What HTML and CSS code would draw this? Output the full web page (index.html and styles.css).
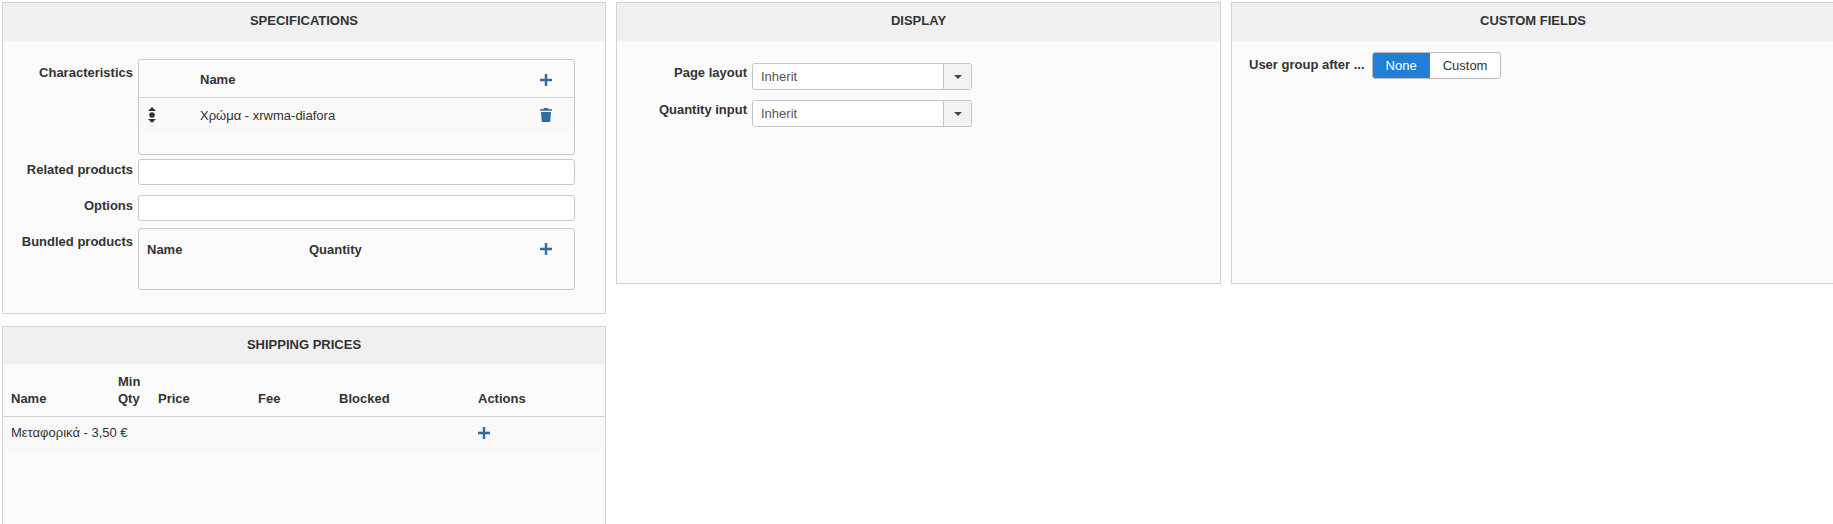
FILE: index.html
```html
<!DOCTYPE html>
<html lang="en">
<head>
  <meta charset="UTF-8" />
  <title>Product – Specifications</title>
  <link rel="stylesheet" href="styles.css">
</head>
<body>
  <svg width="0" height="0" class="defs">
    <symbol id="i-plus" viewBox="0 0 12 12"><path d="M4.800 0h2.400v4.800H12v2.400H7.200V12H4.800V7.200H0V4.800h4.800z"/></symbol>
    <symbol id="i-trash" viewBox="0 0 12 14"><path d="M4 0h4l.6 1.200H12v1.600H0V1.200h3.400zM1 4h10l-.7 9a1 1 0 0 1-1 1H2.700a1 1 0 0 1-1-1z"/></symbol>
    <symbol id="i-sort" viewBox="0 0 10 16"><path d="M5 0l4 4H1zM5 16l-4-4h8z"/><circle cx="5" cy="8" r="2.800"/></symbol>
  </svg>

  <div class="page">
    <div class="column">
      <section class="panel panel-specs">
        <h2 class="panel-title">SPECIFICATIONS</h2>
        <div class="specs-form">
          <div class="form-row row-chars">
            <label class="field-label">Characteristics</label>
            <div class="box box-chars">
              <div class="chars-head">
                <span class="chars-name"><b>Name</b></span>
                <svg class="icon icon-plus"><use href="#i-plus"/></svg>
              </div>
              <div class="chars-item">
                <svg class="icon-sort"><use href="#i-sort"/></svg>
                <span class="chars-name chars-value">Χρώμα - xrwma-diafora</span>
                <svg class="icon icon-trash"><use href="#i-trash"/></svg>
              </div>
            </div>
          </div>
          <div class="form-row row-related">
            <label class="field-label">Related products</label>
            <input class="text-input" type="text" />
          </div>
          <div class="form-row row-options">
            <label class="field-label">Options</label>
            <input class="text-input" type="text" />
          </div>
          <div class="form-row">
            <label class="field-label">Bundled products</label>
            <div class="box box-bundled">
              <div class="bundled-head">
                <b class="bundled-name">Name</b>
                <b class="bundled-qty">Quantity</b>
                <svg class="icon icon-plus"><use href="#i-plus"/></svg>
              </div>
            </div>
          </div>
        </div>
      </section>

      <section class="panel panel-shipping">
        <h2 class="panel-title">SHIPPING PRICES</h2>
        <table class="shipping-table">
          <thead>
            <tr>
              <th class="col-name">Name</th>
              <th class="col-qty">Min Qty</th>
              <th class="col-price">Price</th>
              <th class="col-fee">Fee</th>
              <th class="col-blocked">Blocked</th>
              <th>Actions</th>
            </tr>
          </thead>
          <tbody>
            <tr>
              <td colspan="5">Μεταφορικά - 3,50 €</td>
              <td><svg class="icon icon-plus"><use href="#i-plus"/></svg></td>
            </tr>
          </tbody>
        </table>
      </section>
    </div>

    <section class="panel panel-display">
      <h2 class="panel-title">DISPLAY</h2>
      <div class="display-form">
        <div class="select-row">
          <label class="field-label">Page layout</label>
          <div class="select-box"><span class="select-value">Inherit</span><span class="select-btn"><i class="caret"></i></span></div>
        </div>
        <div class="select-row">
          <label class="field-label">Quantity input</label>
          <div class="select-box"><span class="select-value">Inherit</span><span class="select-btn"><i class="caret"></i></span></div>
        </div>
      </div>
    </section>

    <section class="panel panel-custom">
      <h2 class="panel-title">CUSTOM FIELDS</h2>
      <div class="custom-row">
        <label class="field-label">User group after ...</label>
        <div class="toggle">
          <span class="toggle-btn toggle-on">None</span>
          <span class="toggle-btn">Custom</span>
        </div>
      </div>
    </section>
  </div>
</body>
</html>
```

FILE: styles.css
```css
html, body {
  margin: 0;
  height: 524px;
  overflow: hidden;
  background-color: #fff;
}
body {
  font-family: 'Liberation Sans', Arial, sans-serif;
  font-size: 13px;
  color: #333;
}
.defs {
  display: block;
  height: 0;
}
.page {
  display: flex;
  align-items: flex-start;
  gap: 10px;
  width: 1840px;
  padding: 2px 0 0 2px;
  box-sizing: border-box;
}
.column {
  display: flex;
  flex-direction: column;
  gap: 12px;
  flex: none;
}
.panel {
  flex: none;
  width: 604px;
  box-sizing: border-box;
  border: 1px solid #d3d3d3;
  background-color: #fbfbfb;
}
.panel-specs {
  height: 312px;
}
.panel-shipping {
  height: 240px;
}
.panel-display, .panel-custom {
  height: 282px;
}
.panel-display {
  width: 605px;
}
.panel-title {
  margin: 0;
  height: 38px;
  line-height: 36px;
  background-color: #f0f0f0;
  font-size: 13px;
  font-weight: bold;
  text-align: center;
  color: #333;
}
.panel-shipping .panel-title {
  height: 37px;
  line-height: 35px;
}
.field-label {
  font-weight: bold;
  text-align: right;
  white-space: nowrap;
}
.icon {
  fill: #2f6ca3;
  display: block;
  flex: none;
}
.icon-plus {
  width: 12px;
  height: 12px;
}
.icon-trash {
  width: 12px;
  height: 14px;
}
.icon-sort {
  width: 10px;
  height: 16px;
  fill: #333;
  flex: none;
}

/* specifications */
.specs-form {
  padding: 18px 0 0 0;
}
.form-row {
  display: flex;
  gap: 5px;
  margin-bottom: 7px;
}
.row-chars {
  margin-bottom: 4px;
}
.row-related {
  margin-bottom: 10px;
}
.row-options {
  margin-bottom: 7px;
}
.form-row .field-label {
  width: 130px;
  flex: none;
  padding-top: 6px;
}
.row-related .field-label, .row-options .field-label {
  padding-top: 3px;
}
.box, .text-input {
  width: 437px;
  box-sizing: border-box;
  border: 1px solid #c8c8c8;
  border-radius: 3px;
  flex: none;
}
.text-input {
  height: 26px;
  background-color: #fff;
  margin: 0;
  padding: 0 8px;
}
.box-chars {
  height: 96px;
}
.chars-head {
  display: flex;
  align-items: center;
  justify-content: space-between;
  height: 38px;
  padding: 2px 22px 0 61px;
  box-sizing: border-box;
  border-bottom: 1px solid #d3d3d3;
}
.chars-item {
  display: flex;
  align-items: center;
  height: 35px;
  padding: 0 22px 1px 8px;
  box-sizing: border-box;
  background-color: #f9f9f9;
}
.chars-value {
  margin-left: 43px;
  flex: 1;
}
.box-bundled {
  height: 62px;
}
.bundled-head {
  display: flex;
  align-items: center;
  height: 40px;
  padding: 0 22px 0 8px;
}
.bundled-name {
  width: 162px;
}
.bundled-qty {
  flex: 1;
}

/* shipping */
.shipping-table {
  width: 100%;
  border-collapse: collapse;
  table-layout: fixed;
}
.shipping-table th {
  height: 52px;
  padding: 0 8px 9px;
  box-sizing: border-box;
  vertical-align: bottom;
  text-align: left;
  line-height: 17px;
  border-bottom: 1px solid #d3d3d3;
}
.shipping-table td {
  height: 35px;
  padding: 0 8px 2px;
  box-sizing: border-box;
  background-color: #f9f9f9;
  white-space: nowrap;
}
.col-name { width: 107px; }
.col-qty { width: 40px; }
.col-price { width: 100px; }
.col-fee { width: 81px; }
.col-blocked { width: 139px; }

/* display */
.display-form {
  padding-top: 22px;
}
.select-row {
  display: flex;
  gap: 5px;
  margin-bottom: 10px;
}
.select-row .field-label {
  width: 130px;
  flex: none;
  padding-top: 2px;
}
.select-box {
  display: flex;
  width: 220px;
  height: 27px;
  box-sizing: border-box;
  border: 1px solid #c4c4c4;
  border-radius: 3px;
  background-color: #fff;
  overflow: hidden;
}
.select-value {
  flex: 1;
  padding-left: 8px;
  line-height: 26px;
  color: #555;
}
.select-btn {
  width: 27px;
  display: flex;
  align-items: center;
  justify-content: center;
  background-color: #f2f2f2;
  border-left: 1px solid #c4c4c4;
}
.caret {
  width: 0;
  height: 0;
  border-left: 4px solid transparent;
  border-right: 4px solid transparent;
  border-top: 4px solid #444;
}

/* custom fields */
.custom-row {
  display: flex;
  gap: 7px;
  padding: 11px 0 0 17px;
}
.custom-row .field-label {
  padding-top: 5px;
}
.toggle {
  display: flex;
  height: 27px;
  box-sizing: border-box;
  border: 1px solid #bbb;
  border-radius: 3px;
  background-color: #fff;
  overflow: hidden;
}
.toggle-btn {
  padding: 0 13px;
  line-height: 25px;
}
.toggle-on {
  background-color: #2180d5;
  color: #fff;
}
```
